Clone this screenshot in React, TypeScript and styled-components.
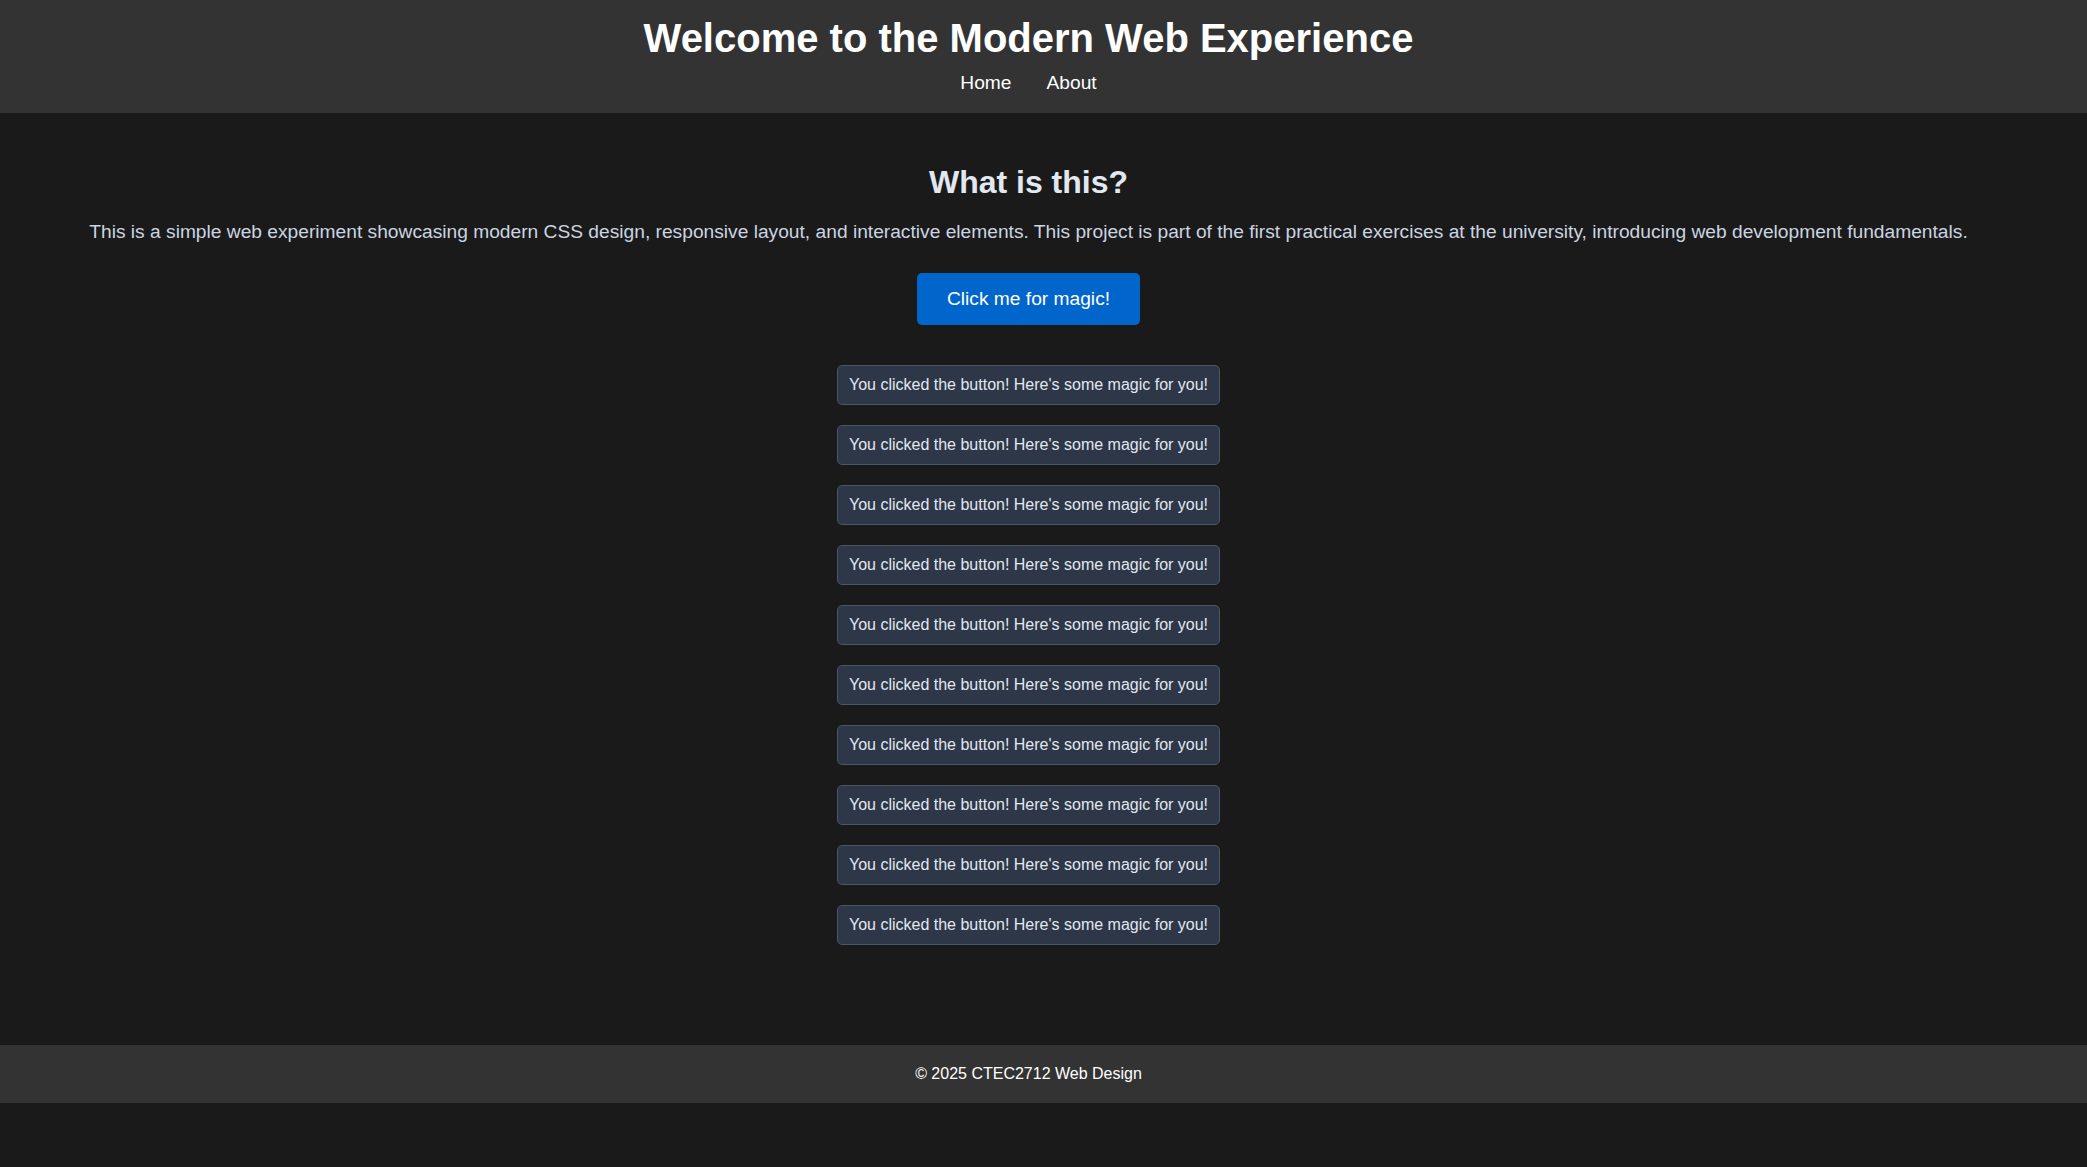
import React from 'react'
import styled, { createGlobalStyle } from 'styled-components'

const GlobalStyle = createGlobalStyle`
  html, body {
    margin: 0;
    padding: 0;
    background-color: #1a1a1a;
    font-family: 'Liberation Sans', Arial, sans-serif;
    color: #e2e8f0;
  }
`

const Header = styled.header`
  background-color: #333333;
  color: #ffffff;
  text-align: center;
  padding: 16px 30px 19px 0;
`

const Title = styled.h1`
  margin: 0 0 11px;
  font-size: 40px;
  font-weight: bold;
`

const Nav = styled.nav`
  display: flex;
  justify-content: center;
  gap: 35px;
`

const NavLink = styled.a`
  color: #ffffff;
  text-decoration: none;
  font-size: 19.2px;
`

const Main = styled.main`
  display: flex;
  flex-direction: column;
  align-items: center;
  text-align: center;
  padding: 51px 30px 100px 0;
`

const Heading = styled.h2`
  margin: 0 0 20px;
  font-size: 32px;
  color: #e2e8f0;
`

const Intro = styled.p`
  margin: 0 0 30px;
  font-size: 19.2px;
  color: #cbd5e0;
`

const MagicButton = styled.button`
  font-family: inherit;
  font-size: 19.2px;
  color: #ffffff;
  background-color: #0066cc;
  border: none;
  border-radius: 5px;
  padding: 15px 30px;
  cursor: pointer;
`

const Messages = styled.div`
  display: flex;
  flex-direction: column;
  align-items: center;
  gap: 20px;
  margin-top: 40px;
`

const Message = styled.div`
  background-color: #2d3748;
  border: 1px solid #4a5568;
  border-radius: 5px;
  padding: 10px 11px;
  font-size: 16px;
  color: #e2e8f0;
`

const Footer = styled.footer`
  background-color: #333333;
  color: #ffffff;
  text-align: center;
  font-size: 16px;
  padding: 20px 30px 20px 0;
`

export default function App(): JSX.Element {
  const [clicks, setClicks] = React.useState(10)

  return (
    <>
      <GlobalStyle />
      <Header>
        <Title>Welcome to the Modern Web Experience</Title>
        <Nav>
          <NavLink href='#'>Home</NavLink>
          <NavLink href='#'>About</NavLink>
        </Nav>
      </Header>
      <Main>
        <Heading>What is this?</Heading>
        <Intro>
          This is a simple web experiment showcasing modern CSS design, responsive layout, and interactive elements. This
          project is part of the first practical exercises at the university, introducing web development fundamentals.
        </Intro>
        <MagicButton onClick={() => setClicks(clicks + 1)}>Click me for magic!</MagicButton>
        <Messages>
          {Array.from({ length: clicks }).map((_, i) => (
            <Message key={i}>You clicked the button! Here's some magic for you!</Message>
          ))}
        </Messages>
      </Main>
      <Footer>© 2025 CTEC2712 Web Design</Footer>
    </>
  )
}
